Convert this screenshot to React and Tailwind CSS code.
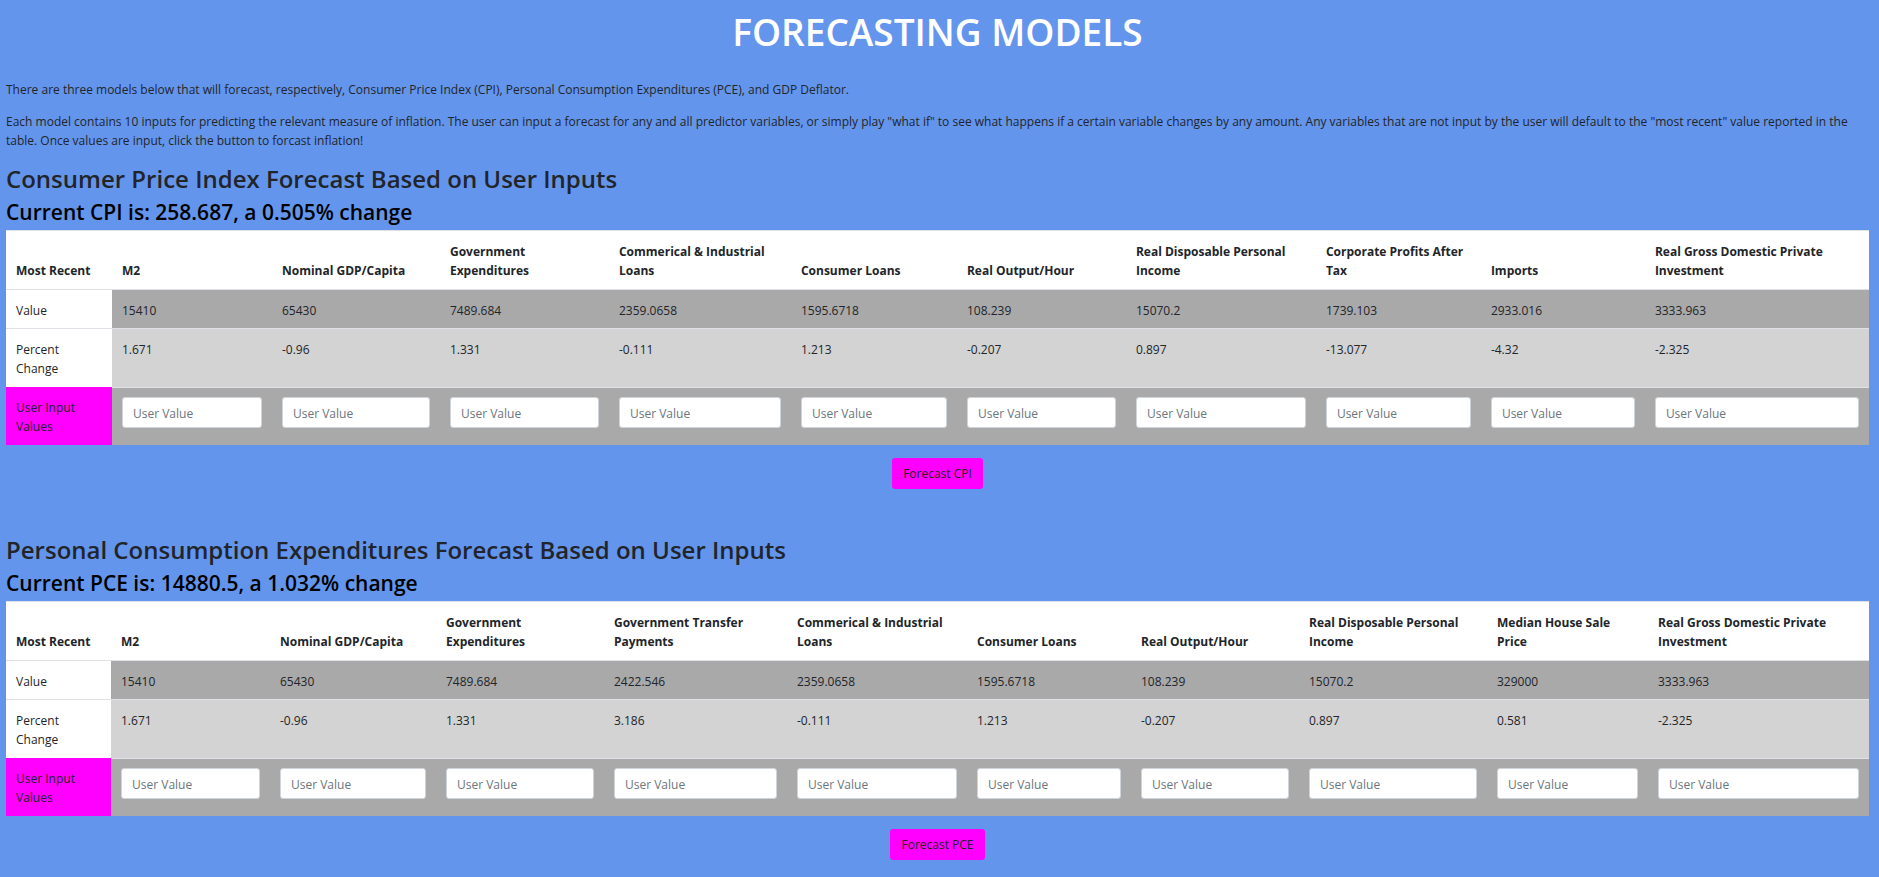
import React from 'react';

const models = [
  {
    id: 'cpi',
    title: 'Consumer Price Index Forecast Based on User Inputs',
    current: 'Current CPI is: 258.687, a 0.505% change',
    button: 'Forecast CPI',
    widths: [106, 160, 168, 169, 182, 166, 169, 190, 165, 164, 224],
    columns: [
      ['M2', '15410', '1.671'],
      ['Nominal GDP/Capita', '65430', '-0.96'],
      ['Government Expenditures', '7489.684', '1.331'],
      ['Commerical & Industrial Loans', '2359.0658', '-0.111'],
      ['Consumer Loans', '1595.6718', '1.213'],
      ['Real Output/Hour', '108.239', '-0.207'],
      ['Real Disposable Personal Income', '15070.2', '0.897'],
      ['Corporate Profits After Tax', '1739.103', '-13.077'],
      ['Imports', '2933.016', '-4.32'],
      ['Real Gross Domestic Private Investment', '3333.963', '-2.325'],
    ],
  },
  {
    id: 'pce',
    title: 'Personal Consumption Expenditures Forecast Based on User Inputs',
    current: 'Current PCE is: 14880.5, a 1.032% change',
    button: 'Forecast PCE',
    widths: [105, 159, 166, 168, 183, 180, 164, 168, 188, 161, 221],
    columns: [
      ['M2', '15410', '1.671'],
      ['Nominal GDP/Capita', '65430', '-0.96'],
      ['Government Expenditures', '7489.684', '1.331'],
      ['Government Transfer Payments', '2422.546', '3.186'],
      ['Commerical & Industrial Loans', '2359.0658', '-0.111'],
      ['Consumer Loans', '1595.6718', '1.213'],
      ['Real Output/Hour', '108.239', '-0.207'],
      ['Real Disposable Personal Income', '15070.2', '0.897'],
      ['Median House Sale Price', '329000', '0.581'],
      ['Real Gross Domestic Private Investment', '3333.963', '-2.325'],
    ],
  },
];

function ForecastModel({ model }) {
  const total = model.widths.reduce((sum, w) => sum + w, 0);
  return (
    <section className="mb-[45px]">
      <h2 className="text-[24px] leading-[31px] font-semibold">{model.title}</h2>
      <h3 className="mt-1 mb-1 text-[21px] leading-[28px] font-semibold text-black">{model.current}</h3>
      <form onSubmit={(e) => e.preventDefault()}>
        <table className="w-full table-fixed border-separate border-spacing-0 text-left">
          <colgroup>
            {model.widths.map((w, i) => (
              <col key={i} style={{ width: `${(w / total) * 100}%` }} />
            ))}
          </colgroup>
          <thead className="bg-white align-bottom font-bold">
            <tr>
              <th scope="col" className="border-y border-[#dee2e6] px-[10px] pt-[11px] pb-[9px]">Most Recent</th>
              {model.columns.map(([name]) => (
                <th key={name} scope="col" className="border-y border-[#dee2e6] px-[10px] pt-[11px] pb-[9px]">{name}</th>
              ))}
            </tr>
          </thead>
          <tbody className="align-top">
            <tr className="bg-[#a9a9a9]">
              <th scope="row" className="bg-white px-[10px] pt-[11px] pb-[8px] font-normal">Value</th>
              {model.columns.map(([name, value]) => (
                <td key={name} className="px-[10px] pt-[11px] pb-[8px]">{value}</td>
              ))}
            </tr>
            <tr className="bg-[#d3d3d3]">
              <th scope="row" className="border-t border-[#dee2e6] bg-white px-[10px] pt-[11px] pb-[9px] font-normal">Percent Change</th>
              {model.columns.map(([name, , change]) => (
                <td key={name} className="border-t border-[#dee2e6] px-[10px] pt-[11px] pb-[9px]">{change}</td>
              ))}
            </tr>
            <tr className="bg-[#a9a9a9]">
              <th scope="row" className="bg-[#ff00ff] px-[10px] pt-[11px] pb-[9px] font-normal">User Input Values</th>
              {model.columns.map(([name]) => (
                <td key={name} className="border-t border-[#dee2e6] px-[10px] pt-[9px]">
                  <input
                    type="text"
                    aria-label={name}
                    placeholder="User Value"
                    className="block h-[31px] w-full rounded-[3px] border border-[#ced4da] bg-white px-[10px] pt-[2px] placeholder:text-[#6c757d]"
                  />
                </td>
              ))}
            </tr>
          </tbody>
        </table>
        <div className="mt-[13px] flex justify-center">
          <button type="submit" className="rounded-[3px] bg-[#ff00ff] px-[11px] py-[6px]">{model.button}</button>
        </div>
      </form>
    </section>
  );
}

export default function App() {
  return (
    <main className="min-h-screen bg-[#6495ed] pr-[10px] pl-[6px] font-['Open_Sans','Noto_Sans',sans-serif] text-[12px] leading-[19px] text-[#212529]">
      <h1 className="pt-2 text-center text-[37px] leading-[48px] font-semibold text-white">FORECASTING MODELS</h1>
      <p className="mt-6 mb-[13px]">
        There are three models below that will forecast, respectively, Consumer Price Index (CPI), Personal Consumption Expenditures (PCE), and GDP Deflator.
      </p>
      <p className="mb-[13px]">
        Each model contains 10 inputs for predicting the relevant measure of inflation. The user can input a forecast for any and all predictor variables, or simply play "what if" to see what happens if a certain variable changes by any amount. Any variables that are not input by the user will default to the "most recent" value reported in the table. Once values are input, click the button to forcast inflation!
      </p>
      {models.map((model) => (
        <ForecastModel key={model.id} model={model} />
      ))}
    </main>
  );
}
